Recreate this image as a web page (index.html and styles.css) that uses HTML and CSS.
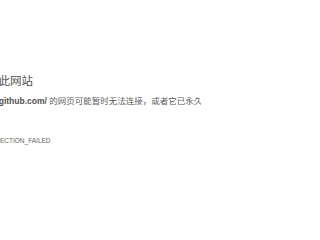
FILE: index.html
```html
<!DOCTYPE html>
<html lang="zh-CN">
<head>
<meta charset="utf-8">
<title>无法访问此网站</title>
<link rel="stylesheet" href="styles.css">
</head>
<body>
<div class="wrapper">
  <h1 class="title">无法访问此网站</h1>
  <p class="message">位于 <strong>https://github.com/</strong> 的网页可能暂时无法连接，或者它已永久性地移动到了新网址。</p>
  <div class="error-code">ERR_CONNECTION_FAILED</div>
</div>
</body>
</html>
```
FILE: styles.css
```css
html, body {
  margin: 0;
  padding: 0;
  background: #ffffff;
  overflow: hidden;
}
body {
  width: 201px;
  height: 201px;
  font-family: "Liberation Sans", "Noto Sans CJK SC", sans-serif;
  color: #646464;
}
.wrapper {
  margin-left: -47.5px;
  padding-top: 73px;
  white-space: nowrap;
}
.title {
  margin: 0;
  font-size: 11.5px;
  line-height: 16px;
  font-weight: normal;
  color: #505050;
}
.message {
  margin: 6px 0 0 -1.5px;
  font-size: 8.5px;
  line-height: 12px;
  color: #606060;
}
.message strong {
  color: #505050;
  font-weight: bold;
}
.error-code {
  margin-top: 30px;
  margin-left: 11px;
  font-size: 6.5px;
  line-height: 8px;
  color: #646464;
  text-transform: uppercase;
}
```
